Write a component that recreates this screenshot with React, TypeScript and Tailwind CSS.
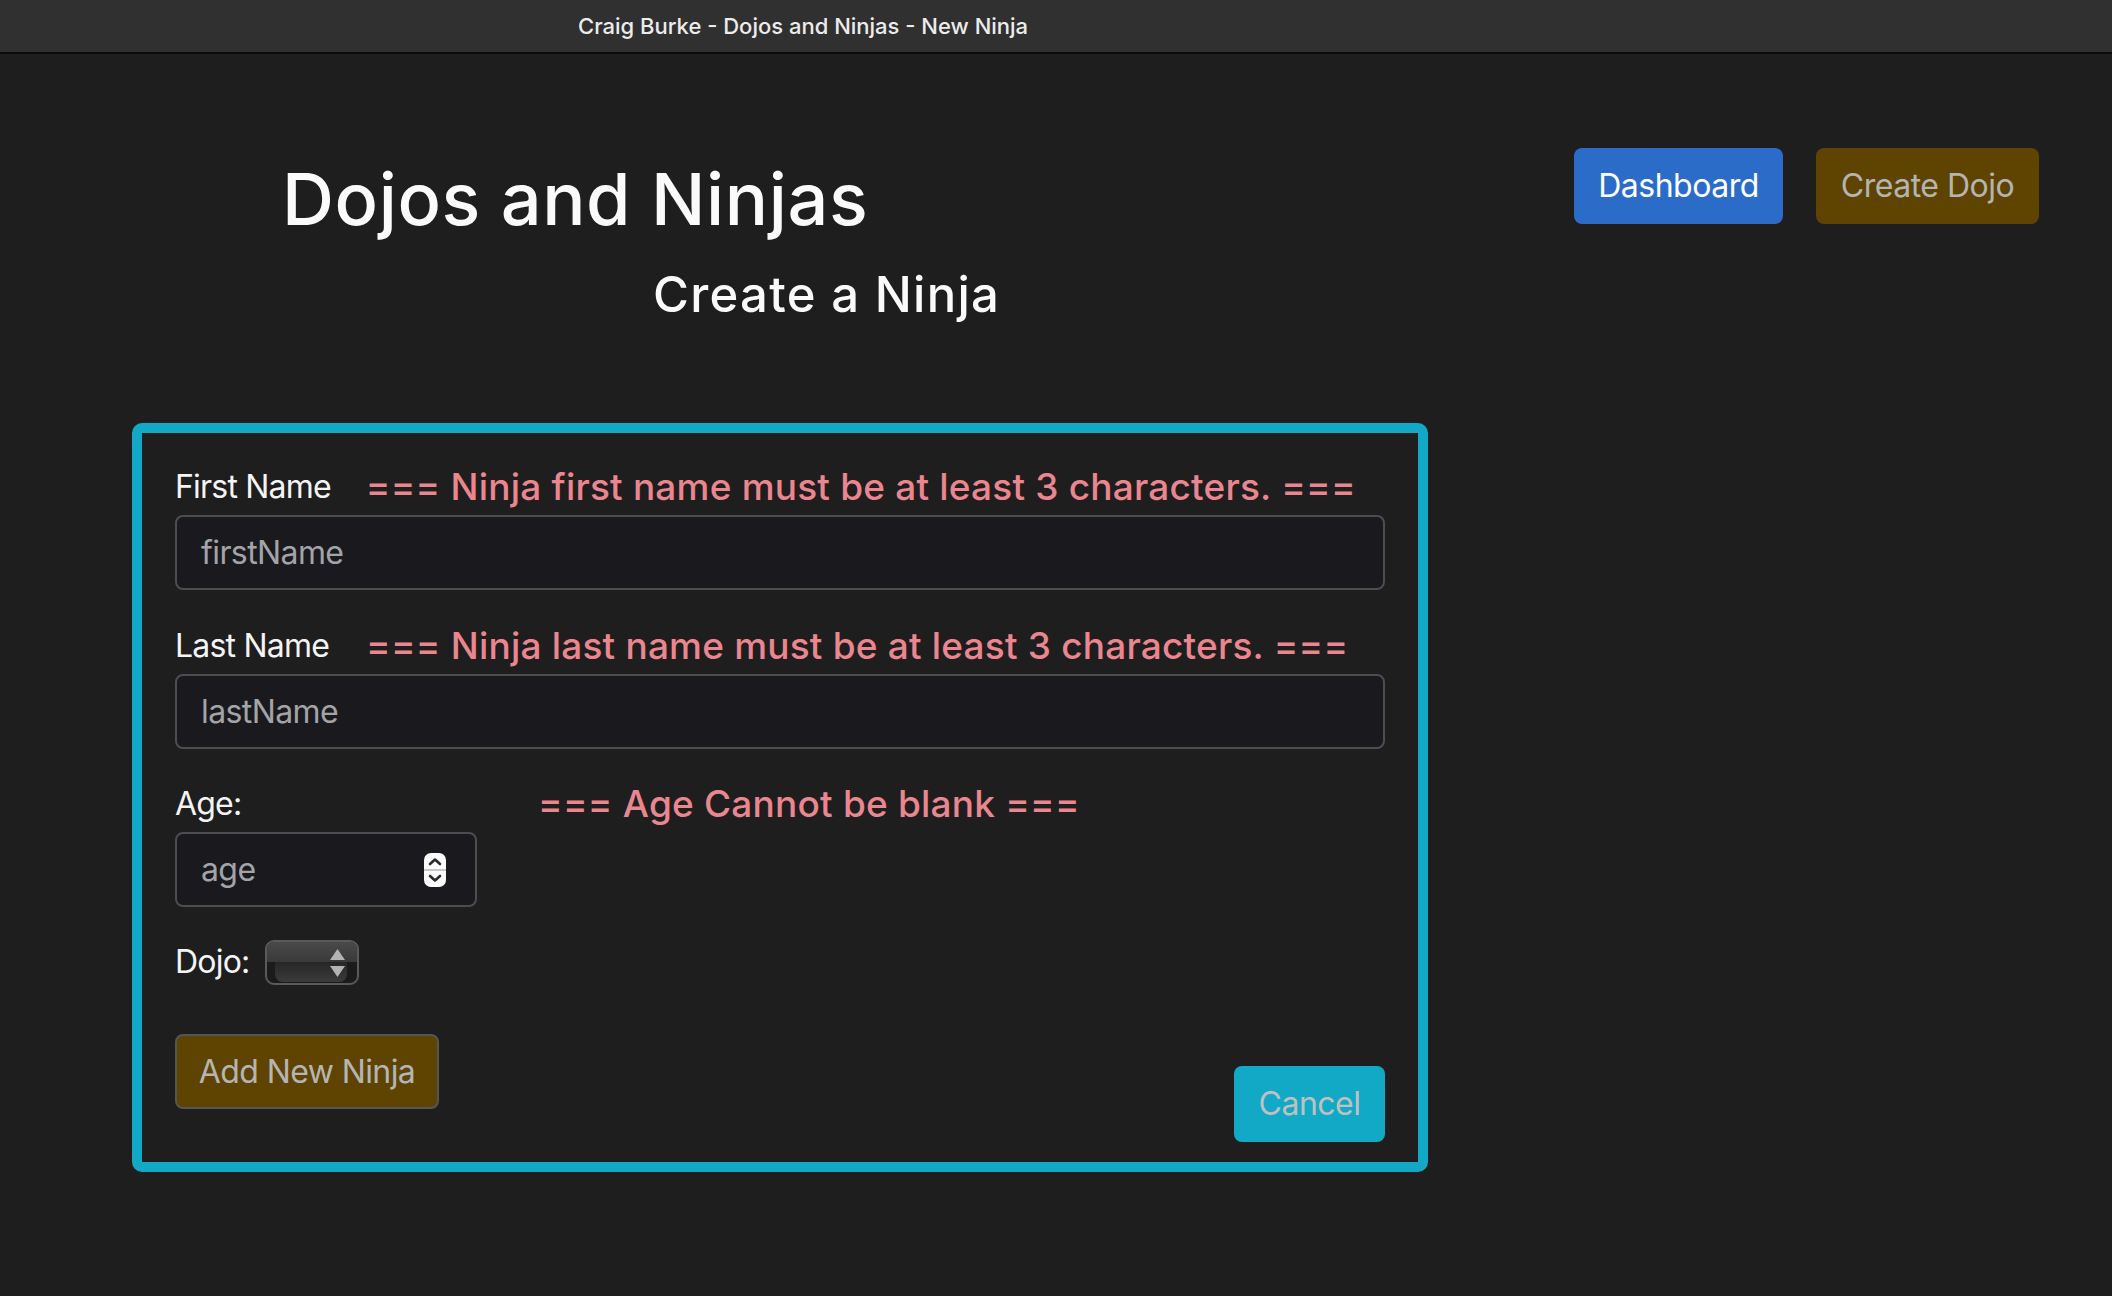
import React from "react";

const font = "font-['Inter','Liberation_Sans',sans-serif]";

const FieldLabel = ({ children }: { children: React.ReactNode }) => (
  <label className="text-[32px] leading-[48px] tracking-[-0.8px] text-[#f4f4f4]">{children}</label>
);

const ErrorText = ({ children, className = "" }: { children: React.ReactNode; className?: string }) => (
  <span className={`text-[37px] leading-[48px] font-medium tracking-[0.2px] text-[#ea868f] ${className}`}>
    {children}
  </span>
);

const Spinner = () => (
  <svg width="22" height="34" viewBox="0 0 22 34">
    <rect x="0" y="0" width="22" height="34" rx="7" fill="#fbfbfb" />
    <line x1="0" y1="17" x2="22" y2="17" stroke="#c9c9c9" strokeWidth="2" />
    <path d="M6 11 L11 6.5 L16 11" fill="none" stroke="#2a2a2a" strokeWidth="2.6" strokeLinecap="round" strokeLinejoin="round" />
    <path d="M6 23 L11 27.5 L16 23" fill="none" stroke="#2a2a2a" strokeWidth="2.6" strokeLinecap="round" strokeLinejoin="round" />
  </svg>
);

const DojoSelect = () => (
  <div className="relative h-[45px] w-[94px] overflow-hidden rounded-[9px] border-2 border-[#5a5a5a] bg-[#1b1b1b]">
    <div className="h-[20px] bg-gradient-to-b from-[#4a4a4a] to-[#393939]" />
    <div className="absolute bottom-[1px] left-[8px] right-[10px] top-[20px] rounded-b-[8px] bg-gradient-to-b from-[#262626] to-[#3b3b3b]" />
    <svg className="absolute right-[12px] top-[7px]" width="15" height="29" viewBox="0 0 15 29">
      <path d="M7.5 0 L15 11 L0 11 Z" fill="#b3b3b3" />
      <path d="M0 17 L15 17 L7.5 28 Z" fill="#b3b3b3" />
    </svg>
  </div>
);

const inputCls =
  "h-[75px] w-full rounded-[8px] border-2 border-[#4d4d50] bg-[#1a1a1e] pl-[24px] text-[32px] tracking-[-0.6px] text-white outline-none placeholder:text-[#a3a4a8]";

export default function App() {
  return (
    <div className={`min-h-screen bg-[#1e1e1e] ${font}`}>
      <div className="flex h-[54px] items-center border-b-2 border-[#0b0b0b] bg-[#303030] pl-[578px] text-[22px] font-medium text-[#ececec]">
        Craig Burke - Dojos and Ninjas - New Ninja
      </div>

      <header className="flex items-start justify-between">
        <div className="pl-[282px] pt-[102px]">
          <h1 className="text-[72px] leading-[1.2] font-medium tracking-[0.6px] text-[#fafafa]">Dojos and Ninjas</h1>
          <h2 className="ml-[371px] mt-[24px] text-[49px] leading-[1.2] font-medium tracking-[1.3px] text-[#fafafa]">
            Create a Ninja
          </h2>
        </div>
        <div className="flex gap-[33px] pr-[73px] pt-[94px]">
          <button className="h-[76px] w-[209px] rounded-[8px] bg-[#2c6cc9] text-[32px] tracking-[-0.5px] text-white">
            Dashboard
          </button>
          <button className="h-[76px] w-[223px] rounded-[8px] bg-[#5e4400] text-[32px] tracking-[-0.5px] text-[#b4b4b4]">
            Create Dojo
          </button>
        </div>
      </header>

      <form className="ml-[132px] mt-[98px] w-[1296px] rounded-[10px] border-[10px] border-[#11a9c6] px-[33px] pb-[20px] pt-[30px]">
        <div className="mb-[32px]">
          <div className="mb-[4px] flex items-end">
            <FieldLabel>First Name</FieldLabel>
            <ErrorText className="ml-[35px]">=== Ninja first name must be at least 3 characters. ===</ErrorText>
          </div>
          <input placeholder="firstName" className={inputCls} />
        </div>

        <div className="mb-[31px]">
          <div className="mb-[4px] flex items-end">
            <FieldLabel>Last Name</FieldLabel>
            <ErrorText className="ml-[37px]">=== Ninja last name must be at least 3 characters. ===</ErrorText>
          </div>
          <input placeholder="lastName" className={inputCls} />
        </div>

        <div className="mb-[31px]">
          <div className="mb-[4px] flex items-end">
            <div className="w-[363px]">
              <FieldLabel>Age:</FieldLabel>
            </div>
            <ErrorText>=== Age Cannot be blank ===</ErrorText>
          </div>
          <div className="flex h-[75px] w-[302px] items-center rounded-[8px] border-2 border-[#4d4d50] bg-[#1a1a1e] pl-[24px] pr-[29px]">
            <input
              placeholder="age"
              className="min-w-0 flex-1 bg-transparent text-[32px] tracking-[-0.6px] text-white outline-none placeholder:text-[#a3a4a8]"
            />
            <Spinner />
          </div>
        </div>

        <div className="flex items-center gap-[16px]">
          <FieldLabel>Dojo:</FieldLabel>
          <DojoSelect />
        </div>

        <div className="mt-[48px] flex items-start justify-between">
          <button
            type="button"
            className="h-[75px] w-[264px] rounded-[8px] border-2 border-[#555555] bg-[#5e4400] text-[32px] tracking-[-0.6px] text-[#b5b5b5]"
          >
            Add New Ninja
          </button>
          <button
            type="button"
            className="mt-[32px] h-[76px] w-[151px] rounded-[8px] bg-[#11a9c6] text-[32px] tracking-[-0.5px] text-[#c0c0c0]"
          >
            Cancel
          </button>
        </div>
      </form>
    </div>
  );
}
